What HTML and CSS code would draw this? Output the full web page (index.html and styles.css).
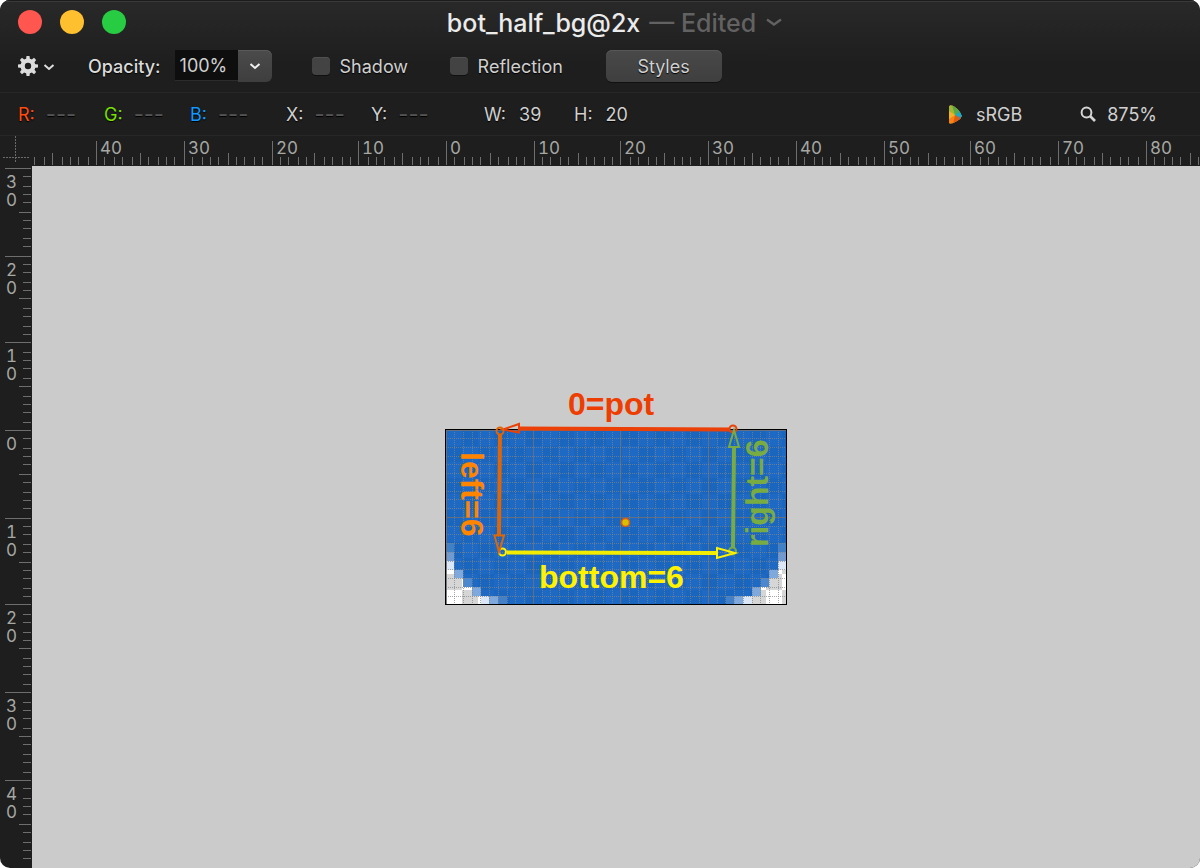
FILE: index.html
```html
<!DOCTYPE html>
<html lang="en">
<head>
<meta charset="utf-8">
<title>bot_half_bg@2x</title>
<link rel="stylesheet" href="styles.css">
</head>
<body>
<div class="window">
  <header class="chrome">
    <div class="titlebar">
      <div class="lights">
        <button class="light close" aria-label="Close"></button>
        <button class="light minimize" aria-label="Minimize"></button>
        <button class="light zoom" aria-label="Zoom"></button>
      </div>
      <button class="doc-title"><span>bot_half_bg@2x</span><span class="edited">— Edited</span><svg width="18" height="12" viewBox="0 0 18 12"><path d="M2 2.500l7 5 7-5" fill="none" stroke="#626262" stroke-width="2.400"/></svg></button>
    </div>
    <div class="toolbar">
      <button class="gear" aria-label="Actions"><svg width="38" height="22" viewBox="0 0 38 22"><g fill="#dcdcdc"><path fill-rule="evenodd" d="M10 3.500a7.500 7.500 0 1 0 0 15a7.500 7.500 0 1 0 0-15zM10 7.800a3.200 3.200 0 1 1 0 6.400a3.200 3.200 0 1 1 0-6.400z"/><path id="tooth" d="M8 5l.5-4h3l.5 4z"/><use href="#tooth" transform="rotate(45 10 11)"/><use href="#tooth" transform="rotate(90 10 11)"/><use href="#tooth" transform="rotate(135 10 11)"/><use href="#tooth" transform="rotate(180 10 11)"/><use href="#tooth" transform="rotate(225 10 11)"/><use href="#tooth" transform="rotate(270 10 11)"/><use href="#tooth" transform="rotate(315 10 11)"/></g><path d="M26.500 10l4.500 4 4.500-4" fill="none" stroke="#dcdcdc" stroke-width="2"/></svg></button>
      <label class="opacity-label" for="opacity">Opacity:</label>
      <div class="combo">
        <input id="opacity" type="text" value="100%">
        <button aria-label="Opacity presets"><svg width="12" height="8" viewBox="0 0 12 8"><path d="M1.500 2l4.500 4 4.500-4" fill="none" stroke="#f0f0f0" stroke-width="2"/></svg></button>
      </div>
      <label class="check shadow"><input type="checkbox">Shadow</label>
      <label class="check reflection"><input type="checkbox">Reflection</label>
      <button class="styles">Styles</button>
    </div>
    <div class="infobar">
      <div class="readouts">
        <span class="color red">R:<i>---</i></span>
        <span class="color green">G:<i>---</i></span>
        <span class="color blue">B:<i>---</i></span>
        <span class="axis">X:<i>---</i></span>
        <span class="axis">Y:<i>---</i></span>
        <span class="size">W:<b>39</b></span>
        <span class="size">H:<b>20</b></span>
      </div>
      <button class="profile"><svg width="13" height="19" viewBox="0 0 13 19"><defs><clipPath id="fan"><path d="M1 0.500Q3 0 5 1.500Q10.500 4.500 12.800 11Q12 14 8 16Q4 18.500 1.500 18.500Q0 18.500 0 17V2Q0 1 1 0.500z"/></clipPath></defs><g clip-path="url(#fan)"><path d="M0 0h13v19H0z" fill="#f2b32a"/><path d="M0 0v6l6 4 0-10z" fill="#a5b52f"/><path d="M3 0l3 10 7-4V0z" fill="#56a64a"/><path d="M6 10l5-6h2v5z" fill="#35a889"/><path d="M6 10l7-3v8z" fill="#18aace"/><path d="M6 10l7 3v6H8z" fill="#a66d48"/><path d="M6 10l5 5-4 4H3z" fill="#e25a12"/><path d="M6 10L4 19H0v-5z" fill="#f98212"/></g></svg>sRGB</button>
      <button class="scale"><svg width="16" height="16" viewBox="0 0 16 16"><circle cx="6.500" cy="6.500" r="4.900" fill="none" stroke="#d5d5d5" stroke-width="2"/><path d="M10 10l5 5" stroke="#d5d5d5" stroke-width="2.600"/></svg>875%</button>
    </div>
  </header>
  <main class="workspace">
    <div class="corner"><svg width="32" height="30" viewBox="0 0 32 30"><path d="M15.500 0v27M3 21.500h27" fill="none" stroke="#6a6a6a" stroke-dasharray="2 1"/></svg></div>
    <svg class="ruler" id="ruler-x"></svg>
    <svg class="ruler" id="ruler-y"></svg>
    <div class="canvas" id="canvas">
      <svg class="artwork" width="342" height="176" viewBox="445 429 342 176">
        <defs>
          <pattern id="checker" x="446" y="430" width="32" height="32" patternUnits="userSpaceOnUse"><path d="M0 0h32v32H0z" fill="#fff"/><path d="M16 0h16v16H16zM0 16h16v16H0z" fill="#d6d6d6"/></pattern>
          <pattern id="fill" x="446" y="430" width="32" height="32" patternUnits="userSpaceOnUse"><path d="M0 0h32v32H0z" fill="#1e69c4"/><path d="M16 0h16v16H16zM0 16h16v16H0z" fill="#1a65bd"/></pattern>
        </defs>
        <path d="M445 429h342v176H445z" fill="#000"/>
        <path d="M446 430h340v174H446z" fill="url(#checker)"/>
        <g id="pixels" shape-rendering="crispEdges"></g>
        <g id="grid" shape-rendering="crispEdges"></g>
        <circle cx="625.500" cy="522.500" r="4" fill="#d6c000" stroke="#e0590c" stroke-width="1.500"/>
        <g fill="none" stroke="#78ab42" stroke-width="2">
          <circle cx="732.500" cy="551" r="3.500"/><path d="M733 548L734 447" stroke-width="4"/>
        </g>
        <g fill="none" stroke="#eb4008" stroke-width="2">
          <circle cx="733" cy="429" r="3.500"/><path d="M730 429.500L519 428.500" stroke-width="4"/><path d="M503 429.500L519 424v8.500z" stroke-width="2"/>
        </g>
        <path d="M729 447h10L734 430z" fill="none" stroke="#78ab42" stroke-width="2"/>
        <g fill="none" stroke="#fff200" stroke-width="2">
          <circle cx="502.500" cy="552" r="3.500"/><path d="M507 552.500L717 553" stroke="#f2ec00" stroke-width="4"/><path d="M717 548v10L735 553z"/>
        </g>
        <g fill="none" stroke="#df6505" stroke-width="2">
          <circle cx="500" cy="431" r="3.500"/><path d="M500 435L499 535" stroke-width="4"/><path d="M494.500 535.500h9.500L499 552z" stroke-width="2"/>
        </g>
        <text class="note" x="568" y="415" fill="#ee3d00">0=pot</text>
        <text class="note" x="539" y="588" fill="#fff200">bottom=6</text>
        <text class="note" transform="translate(461 452) rotate(90)" fill="#ff8500">left=6</text>
        <text class="note" transform="translate(768 547) rotate(-90)" fill="#78ab42">right=6</text>
      </svg>
    </div>
  </main>
</div>
<script src="app.js"></script>
</body>
</html>
```
FILE: styles.css
```css
* { box-sizing: border-box; }
body { margin: 0; background: #fff; font-family: Inter, "Liberation Sans", sans-serif; font-size: 18px; color: #d0d0d0; }
button, input { font: inherit; color: inherit; border: 0; margin: 0; padding: 0; background: none; }
svg { display: block; flex: none; }

.window { display: flex; flex-direction: column; min-height: 100vh; border-radius: 10px; overflow: hidden; background: #1e1e1e; }
.chrome { background: linear-gradient(#292929, #1e1e1e 64px); box-shadow: inset 0 1px #1c1c1c, inset 0 2px #393939; text-shadow: 0 1px 1px #000; }

.titlebar { display: grid; grid-template-columns: 1fr auto 1fr; align-items: center; height: 46px; padding: 0 18px; }
.lights { display: flex; gap: 18px; padding-bottom: 2px; }
.light { width: 24px; height: 24px; border-radius: 50%; }
.close { background: #ff5650; }
.minimize { background: #ffc02f; }
.zoom { background: #28cc42; }
.doc-title { display: flex; align-items: center; gap: 9px; margin-left: 30px; font-size: 25px; font-weight: 500; color: #ebebeb; text-shadow: none; }
.edited { color: #626262; }

.toolbar { display: flex; align-items: center; height: 46px; padding: 0 18px 6px; }
.gear { width: 38px; }
.opacity-label { margin-left: 32px; font-weight: 500; color: #dcdcdc; }
.combo { display: flex; margin-left: 14px; }
.combo input { width: 63px; height: 31px; padding: 0 5px; background: #0e0e0e; border-bottom: 1px solid #2c2c2c; }
.combo button { display: grid; place-items: center; width: 34px; height: 32px; border-radius: 0 6px 6px 0; background: linear-gradient(#4b4b4b, #3e3e3e); box-shadow: inset 0 1px #5a5a5a; }
.check { display: flex; align-items: center; gap: 10px; }
.check input { appearance: none; width: 18px; height: 18px; border-radius: 4px; background: #434343; box-shadow: inset 0 1px #505050, 0 1px #101010; }
.shadow { width: 98px; margin-left: 40px; }
.reflection { width: 116px; margin-left: 40px; }
.styles { width: 116px; height: 32px; margin-left: 40px; border-radius: 6px; background: linear-gradient(#494949, #3f3f3f); box-shadow: inset 0 1px #575757, 0 1px #111; text-shadow: inherit; }

.infobar { display: flex; align-items: center; height: 44px; border: solid #272727; border-width: 1px 0; padding: 0 43px 0 18px; }
.readouts { display: flex; flex: 1; }
.readouts i, .readouts b { font-style: normal; font-weight: 400; }
.readouts span { display: flex; align-items: center; }
.readouts i { font-size: 22px; line-height: 22px; color: #555; }
.color { width: 86px; gap: 11px; }
.axis { width: 85px; gap: 11px; }
.blue { width: 96px; }
.size { width: 90px; gap: 13px; }
.axis + .size { margin-left: 28px; }
.red { color: #ff4b0f; }
.green { color: #7ae000; }
.blue { color: #1199ff; }
.profile, .scale { display: flex; align-items: center; }
.profile { gap: 14px; margin-right: 58px; }
.scale { gap: 11px; }

.workspace { flex: 1; display: grid; grid-template-columns: 32px 1fr; grid-template-rows: 30px 1fr; }
.ruler { width: 100%; height: 100%; overflow: hidden; font-size: 17px; font-feature-settings: "tnum"; }
.ruler text { fill: #a6a8a4; }
.canvas { display: grid; place-items: center; background: #cbcbcb; min-height: 240px; min-width: 360px; }
.artwork { overflow: visible; }
.note { font: bold 32px "Liberation Sans", sans-serif; }
```
FILE: app.js
```js
const NS = 'http://www.w3.org/2000/svg';
const SCALE = 8.75;
const RULER_SCALE = 8.749;
const COLS = 39;
const ROWS = 20;

function add(parent, name, attrs, text) {
  const node = document.createElementNS(NS, name);
  for (const key in attrs) node.setAttribute(key, attrs[key]);
  if (text !== undefined) node.textContent = text;
  parent.appendChild(node);
}

function drawRulers() {
  const canvas = document.getElementById('canvas');
  const rx = document.getElementById('ruler-x');
  const ry = document.getElementById('ruler-y');
  rx.replaceChildren();
  ry.replaceChildren();
  const w = canvas.clientWidth;
  const h = canvas.clientHeight;
  const ox = Math.floor((w - 342) / 2) + 1;
  const oy = Math.floor((h - 176) / 2) + 1;
  const tick = (i, major, mid, minor) => i % 10 === 0 ? major : i % 5 === 0 ? mid : minor;
  const snap = v => 2 * Math.round(v / 2);
  for (let i = -Math.floor(ox / SCALE); i * SCALE + ox < w; i++) {
    const x = snap(ox + i * RULER_SCALE);
    const len = tick(i, 24, 12, 8);
    add(rx, 'rect', { x, y: 29 - len, width: 1, height: len, fill: '#6e6e6e' });
    if (i % 10 === 0 && x + 24 < w) add(rx, 'text', { x: x + 4, y: 18 }, Math.abs(i));
  }
  for (let i = -Math.floor(oy / SCALE); i * SCALE + oy < h; i++) {
    const y = snap(oy + i * RULER_SCALE);
    const len = tick(i, 26, 12, 8);
    add(ry, 'rect', { x: 31 - len, y, width: len, height: 1, fill: '#6e6e6e' });
    if (i % 10 === 0 && y + 40 < h) [...String(Math.abs(i))].forEach((d, n) => add(ry, 'text', { x: 6, y: y + 20 + n * 18 }, d));
  }
}

function drawPixels() {
  const g = document.getElementById('pixels');
  const edge = { '0,13': '#4080c6', '0,14': '#719bd0', '0,15': '#dbe6f6', '1,16': '#7fa8dd', '2,17': '#4d88cf', '3,18': '#7fa8dd', '4,19': '#dbe6f6', '5,19': '#7fa8dd', '6,19': '#4480c8' };
  const clear = [0, 0, 0, 0, 0, 0, 0, 0, 0, 0, 0, 0, 0, 0, 0, 0, 1, 2, 3, 4];
  const at = (o, n) => Math.round(o + n * SCALE - 0.3);
  for (let j = 0; j < ROWS; j++) {
    for (let i = clear[j]; i < COLS - clear[j]; i++) {
      const m = Math.min(i, COLS - 1 - i);
      const x = i ? at(446, i) : 446;
      const y = j ? at(430, j) : 430;
      const right = Math.min(at(446, i + 1), 786);
      const bottom = Math.min(at(430, j + 1), 604);
      const fill = edge[m + ',' + j] || 'url(#fill)';
      add(g, 'rect', { x, y, width: right - x, height: bottom - y, fill });
    }
  }
}

function drawGrid() {
  const g = document.getElementById('grid');
  const line = (d, major) => add(g, 'path', { d, stroke: major ? '#6b7078' : '#808488', 'stroke-opacity': major ? 0.9 : 0.7, 'stroke-dasharray': major ? 'none' : '1 1', fill: 'none' });
  for (let i = 0; i < COLS; i++) line(`M${Math.max(446, Math.ceil(446 + i * SCALE) - 1) + 0.5} 430V604`, i % 10 === 0);
  for (let j = 0; j < ROWS; j++) line(`M446 ${Math.max(430, Math.ceil(430 + j * SCALE) - 1) + 0.5}H786`, j % 10 === 0);
}

drawPixels();
drawGrid();
drawRulers();
window.addEventListener('resize', drawRulers);
```
